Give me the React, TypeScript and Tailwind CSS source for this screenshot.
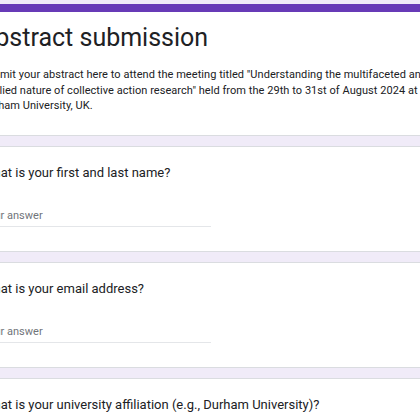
const questions = [
  "What is your first and last name?",
  "What is your email address?",
  "What is your university affiliation (e.g., Durham University)?",
]

function QuestionCard({ title }: { title: string }) {
  return (
    <div className="rounded-lg border border-[#dadce0] bg-white px-[24px] pt-[14px] pb-[24px]">
      <div className="whitespace-nowrap text-[13px] leading-[24px] text-[#202124]">{title}</div>
      <div className="mt-[21px] w-[229px] border-b border-[#e4e6e9] text-[11px] leading-[20px] text-[#70757a]">
        Your answer
      </div>
    </div>
  )
}

export default function App() {
  return (
    <div className="h-[420px] w-[420px] overflow-hidden bg-[#f0ebf8] font-['Roboto',sans-serif] text-[#202124]">
      <div className="-ml-[43px] flex w-[620px] flex-col gap-[10px] pt-[4px]">
        <div className="overflow-hidden rounded-lg border border-t-0 border-[#dadce0] bg-white">
          <div className="h-[8px] bg-[#673ab7]" />
          <div className="px-[24px] pt-[10px] pb-[21px]">
            <h1 className="-ml-[3px] text-[25px] leading-[32px] font-normal">Abstract submission</h1>
            <p className="mt-[13px] -ml-[1px] whitespace-nowrap text-[11px] leading-[15.5px] tracking-[0.05px]">
              Submit your abstract here to attend the meeting titled "Understanding the multifaceted and
              <br />
              applied nature of collective action research" held from the 29th to 31st of August 2024 at
              <br />
              Durham University, UK.
            </p>
          </div>
        </div>
        {questions.map((q, i) => (
          <QuestionCard key={i} title={q} />
        ))}
      </div>
    </div>
  )
}
